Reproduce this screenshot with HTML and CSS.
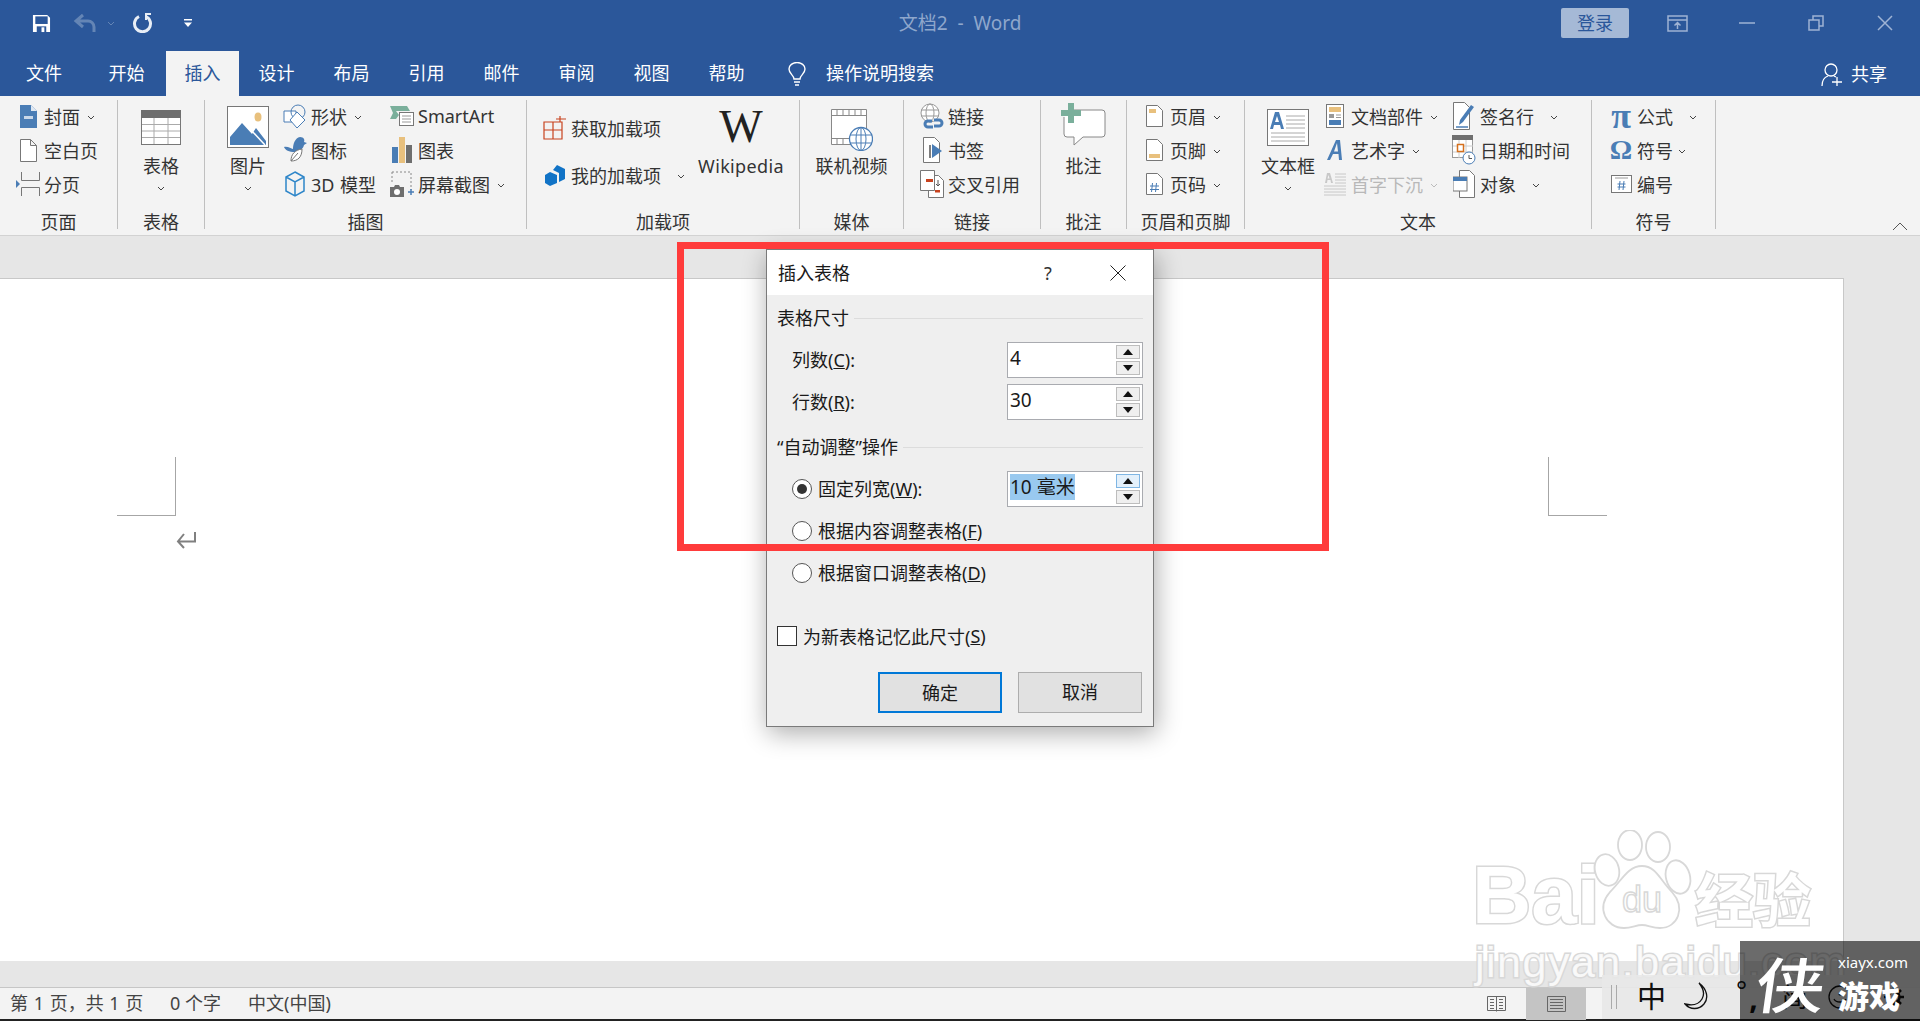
FILE: index.html
```html
<!DOCTYPE html>
<html lang="zh-CN">
<head>
<meta charset="utf-8">
<title>文档2 - Word</title>
<link rel="stylesheet" href="styles.css">
</head>
<body>
<div class="app">
  <header class="titlebar">
    <div class="qat">
      <svg class="q-save" viewBox="0 0 20 20"><path fill="#fff" d="M1 1h15l3 3v15H1z"/><rect x="3.500" y="2.500" width="13" height="8" fill="#2b579a"/><rect x="5" y="13" width="10" height="6" fill="#2b579a"/><rect x="10" y="14" width="3" height="5" fill="#fff"/></svg>
      <svg class="q-undo" viewBox="0 0 24 20"><path fill="none" stroke="#6485b5" stroke-width="3" d="M10 2 3 8l7 6M3 8h12a6 6 0 0 1 6 6v5"/></svg>
      <svg class="q-undo-chev" viewBox="0 0 8 5"><path fill="none" stroke="#6485b5" d="m1 1 3 3 3-3"/></svg>
      <svg class="q-redo" viewBox="0 0 22 20"><path fill="none" stroke="#e8eef6" stroke-width="3" d="M7 3.500a8 8 0 1 0 7 0"/><path fill="#e8eef6" d="M13 0h6v2h-4v5h-2z"/></svg>
      <svg class="q-more" viewBox="0 0 10 10"><path fill="#fff" d="M1 1h8v1.500H1zM1 4.500h8L5 9z"/></svg>
    </div>
    <div class="doc-title">文档2&nbsp; - &nbsp;Word</div>
    <div class="win">
      <span class="login">登录</span>
      <svg class="w-opt" viewBox="0 0 21 17"><path fill="none" stroke="#9fb3d4" stroke-width="1.500" d="M1 1h19v15H1zM1 5h19M10.500 14V8M7.500 10.500l3-3 3 3"/></svg>
      <svg class="w-min" viewBox="0 0 16 16"><path stroke="#9fb3d4" stroke-width="1.500" d="M0 8h16"/></svg>
      <svg class="w-res" viewBox="0 0 16 16"><path fill="none" stroke="#9fb3d4" stroke-width="1.500" d="M1 5h10v10H1zM5 5V1h10v10h-4"/></svg>
      <svg class="w-close" viewBox="0 0 16 16"><path stroke="#9fb3d4" stroke-width="1.500" d="m1 1 14 14M15 1 1 15"/></svg>
    </div>
  </header>

  <nav class="tabs">
    <span class="tab tab-file">文件</span>
    <span class="tab">开始</span>
    <span class="tab tab-on">插入</span>
    <span class="tab">设计</span>
    <span class="tab">布局</span>
    <span class="tab">引用</span>
    <span class="tab">邮件</span>
    <span class="tab">审阅</span>
    <span class="tab">视图</span>
    <span class="tab">帮助</span>
    <svg class="bulb" viewBox="0 0 18 24"><path fill="none" stroke="#fff" stroke-width="1.400" d="M6 17c0-4-5-5-5-10a8 6.500 0 0 1 16 0c0 5-5 6-5 10zM6 20h6M7 23h4"/></svg>
    <span class="search">操作说明搜索</span>
    <span class="share">
      <svg class="share-ico" viewBox="0 0 22 24"><circle cx="10" cy="7" r="6" fill="none" stroke="#fff" stroke-width="1.300"/><path fill="none" stroke="#fff" stroke-width="1.300" d="M1 23c0-6 3-9 6-10M13 13l2 1M16 14v9M11 19h10"/></svg>
      共享
    </span>
  </nav>

  <section class="ribbon">
    <div class="group g-page">
      <div class="gbody pad16">
        <div class="col">
          <div class="row"><span class="slot"><svg width="17" height="23" viewBox="0 0 17 23"><path fill="#4a7db5" d="M0 0h11l6 6v17H0z"/><path fill="#dfe8f2" d="M11 0l6 6h-6z"/><rect x="4" y="11" width="9" height="3" fill="#fff" opacity=".7"/></svg></span><span>封面</span><svg class="chev" viewBox="0 0 8 5"><path d="m1 1 3 3 3-3"/></svg></div>
          <div class="row"><span class="slot"><svg width="17" height="23" viewBox="0 0 17 23"><path fill="#fff" stroke="#777" d="M.5.500h10l6 6v16H.5zM10.500.500v6h6"/></svg></span><span>空白页</span></div>
          <div class="row"><span class="slot"><svg width="24" height="24" viewBox="0 0 24 24"><path fill="none" stroke="#777" d="M5.500 0v8.500h18V0M5.500 24v-8.500h18V24"/><path fill="#4a7db5" d="M0 8l4 4-4 4z"/></svg></span><span>分页</span></div>
        </div>
      </div>
      <div class="glabel">页面</div>
    </div>

    <div class="group g-table">
      <div class="gbody center">
        <div class="big">
          <div class="bigicon"><svg width="40" height="35" viewBox="0 0 40 35"><rect x=".5" y=".5" width="39" height="34" fill="#fff" stroke="#777"/><rect width="40" height="8" fill="#6e6e6e"/><path stroke="#aaa" d="M13 8v26M27 8v26M1 14.500h38M1 21h38M1 27.500h38"/></svg></div>
          <div class="bigtext">表格</div>
          <svg class="bigchev" viewBox="0 0 8 5"><path d="m1 1 3 3 3-3"/></svg>
        </div>
      </div>
      <div class="glabel">表格</div>
    </div>

    <div class="group g-illus">
      <div class="gbody">
        <div class="big big-pic">
          <div class="bigicon"><svg width="42" height="42" viewBox="0 0 42 42"><rect x=".5" y=".5" width="41" height="41" fill="#fff" stroke="#777"/><ellipse cx="31" cy="11" rx="3.500" ry="4.500" fill="#e8c07d"/><path fill="#4a7db5" d="M3 39V31L15 17l10 11 4-6 10 13v4z"/><path stroke="#fff" stroke-width="1.500" d="m24 24 14 15"/></svg></div>
          <div class="bigtext">图片</div>
          <svg class="bigchev" viewBox="0 0 8 5"><path d="m1 1 3 3 3-3"/></svg>
        </div>
        <div class="col col-shape">
          <div class="row"><span class="slot"><svg width="24" height="24" viewBox="0 0 24 24"><path fill="#fff" stroke="#4a7db5" d="M1 7h12v11H1z"/><circle cx="15" cy="8" r="7" fill="none" stroke="#4a7db5"/><path fill="#fff" stroke="#4a7db5" d="m14 8 8 8-8 8-7-8z"/></svg></span><span>形状</span><svg class="chev" viewBox="0 0 8 5"><path d="m1 1 3 3 3-3"/></svg></div>
          <div class="row"><span class="slot"><svg width="23" height="26" viewBox="0 0 23 26"><path fill="#4a7db5" d="M0 10c4-1 7 2 9 2 0-5 2-11 7-12 4 0 5 3 4 5l3 1-3 2c-1 4-4 6-9 7-6 0-10-2-11-5z"/><path fill="#fff" stroke="#777" d="M7 24c0-7 4-11 11-12 0 8-4 12-11 12zM7 24l7-8"/></svg></span><span>图标</span></div>
          <div class="row"><span class="slot"><svg width="20" height="26" viewBox="0 0 20 26"><path fill="none" stroke="#2e86c9" stroke-width="1.500" d="M10 1 19 6v14l-9 5-9-5V6zM1 6l9 5 9-5M10 11v14"/></svg></span><span class="wide-text">3D 模型</span></div>
        </div>
        <div class="col">
          <div class="row"><span class="slot"><svg width="24" height="20" viewBox="0 0 24 20"><path fill="#7aaf9b" d="M0 0h17l3 5H6l3 4-3 4H0l3-6z"/><rect x="9.500" y="6.500" width="14" height="13" fill="#fff" stroke="#777"/><path stroke="#999" d="M12 10h9M12 13h9M12 16h9"/></svg></span><span>SmartArt</span></div>
          <div class="row"><span class="slot"><svg width="20" height="26" viewBox="0 0 20 26"><rect y="10" width="6" height="16" fill="#4a7db5"/><rect x="7" width="6" height="26" fill="#e8c07d"/><rect x="14" y="8" width="6" height="18" fill="#6e6e6e"/></svg></span><span>图表</span></div>
          <div class="row"><span class="slot"><svg width="24" height="26" viewBox="0 0 24 26"><path fill="none" stroke="#888" stroke-dasharray="2 2" d="M2 1h19v18"/><path fill="none" stroke="#888" stroke-dasharray="2 2" d="M2 1v12"/><path fill="#6e6e6e" d="M0 16h4l1-2h4l1 2h4v10H0z"/><circle cx="7" cy="21" r="3" fill="#fff"/><path stroke="#4a7db5" stroke-width="1.500" d="M18 21h6M21 18v6"/></svg></span><span>屏幕截图</span><svg class="chev" viewBox="0 0 8 5"><path d="m1 1 3 3 3-3"/></svg></div>
        </div>
      </div>
      <div class="glabel">插图</div>
    </div>

    <div class="group g-addin">
      <div class="gbody pad16">
        <div class="col col-addin">
          <div class="row"><span class="slot"><svg width="24" height="24" viewBox="0 0 24 24"><path fill="none" stroke="#c8431f" stroke-width="1.200" d="M1 6h18v17H1zM10 6v17M1 14h18M17 6V0M13 3h10"/></svg></span><span>获取加载项</span></div>
          <div class="row"><span class="slot"><svg width="20" height="21" viewBox="0 0 20 21"><path fill="#1173c6" d="M12 0l8 4v10l-6 3V8L8 5z"/><path fill="#1173c6" d="M5 7l7 3v8l-7 3-5-3v-8z"/></svg></span><span>我的加载项</span><svg class="chev chev-wide" viewBox="0 0 8 5"><path d="m1 1 3 3 3-3"/></svg></div>
        </div>
        <div class="big big-wiki">
          <div class="bigicon"><span class="wiki-w">W</span></div>
          <div class="bigtext wiki-text">Wikipedia</div>
        </div>
      </div>
      <div class="glabel">加载项</div>
    </div>

    <div class="group g-media">
      <div class="gbody center">
        <div class="big">
          <div class="bigicon"><svg class="down3" width="42" height="42" viewBox="0 0 42 42"><path fill="#fff" stroke="#888" d="M.5.500h35v35H.5z"/><path fill="none" stroke="#888" d="M.5 6.500h35M.5 29.500h35M6 .5v6M12 .5v6M18 .5v6M24 .5v6M30 .5v6M6 29.500v6M12 29.500v6"/><circle cx="30" cy="30" r="11.500" fill="#fff" stroke="#4a7db5" stroke-width="1.300"/><ellipse cx="30" cy="30" rx="5" ry="11.500" fill="none" stroke="#4a7db5"/><path stroke="#4a7db5" d="M30 18v24M19 26h22M19 34h22"/></svg></div>
          <div class="bigtext">联机视频</div>
        </div>
      </div>
      <div class="glabel">媒体</div>
    </div>

    <div class="group g-links">
      <div class="gbody pad16">
        <div class="col">
          <div class="row"><span class="slot"><svg width="24" height="26" viewBox="0 0 24 26"><circle cx="10" cy="10" r="9" fill="#fff" stroke="#999"/><ellipse cx="10" cy="10" rx="4" ry="9" fill="none" stroke="#999"/><path stroke="#999" d="M1 7h18M1 13h18"/><path fill="none" stroke="#4a7db5" stroke-width="3" d="M12 18h-4a3 3 0 0 0 0 6h5M14 23h5a3 3 0 0 0 0-6h-5"/></svg></span><span>链接</span></div>
          <div class="row"><span class="slot"><svg width="19" height="26" viewBox="0 0 19 26"><path fill="#fff" stroke="#777" d="M.5.500h11l5 5v20H.5z"/><path stroke="#555" stroke-width="1.500" d="M7 8v13"/><path fill="#4a7db5" d="M9 7l10 7-10 7z"/></svg></span><span>书签</span></div>
          <div class="row"><span class="slot"><svg width="24" height="28" viewBox="0 0 24 28"><path fill="#fff" stroke="#777" d="M8.500 5.500h10l5 5v17h-15z"/><path fill="#fff" stroke="#777" d="M.5.500h14v20H.5z"/><rect x="6" y="9" width="7" height="3" fill="#c8431f"/><rect x="15" y="20" width="5" height="2.500" fill="#c8431f"/><path stroke="#555" fill="none" d="M18 10v6M16 14l2 2 2-2"/></svg></span><span>交叉引用</span></div>
        </div>
      </div>
      <div class="glabel">链接</div>
    </div>

    <div class="group g-comment">
      <div class="gbody center">
        <div class="big">
          <div class="bigicon"><svg class="up3" width="45" height="43" viewBox="0 0 45 43"><path fill="#fff" stroke="#888" d="M11 7h30a3 3 0 0 1 3 3v21a3 3 0 0 1-3 3H22l-9 8v-8H6a3 3 0 0 1-3-3V14"/><path fill="#7aaf9b" d="M7 0h6v7h7v6h-7v7H7v-7H0V7h7z"/></svg></div>
          <div class="bigtext">批注</div>
        </div>
      </div>
      <div class="glabel">批注</div>
    </div>

    <div class="group g-hf">
      <div class="gbody pad15">
        <div class="col">
          <div class="row"><span class="slot"><svg width="17" height="22" viewBox="0 0 17 22"><path fill="#fff" stroke="#777" d="M.5.500h11l5 5v16H.5z"/><rect x="3" y="4" width="7" height="4" fill="#e8c07d"/></svg></span><span>页眉</span><svg class="chev" viewBox="0 0 8 5"><path d="m1 1 3 3 3-3"/></svg></div>
          <div class="row"><span class="slot"><svg width="17" height="22" viewBox="0 0 17 22"><path fill="#fff" stroke="#777" d="M.5.500h11l5 5v16H.5z"/><rect x="3" y="15" width="11" height="4" fill="#e8c07d"/></svg></span><span>页脚</span><svg class="chev" viewBox="0 0 8 5"><path d="m1 1 3 3 3-3"/></svg></div>
          <div class="row"><span class="slot"><svg width="17" height="22" viewBox="0 0 17 22"><path fill="#fff" stroke="#777" d="M.5.500h11l5 5v16H.5z"/><path stroke="#4a7db5" d="M6.500 10 5.500 19M10.500 10l-1 9M4 13h9M4 16.500h9"/></svg></span><span>页码</span><svg class="chev" viewBox="0 0 8 5"><path d="m1 1 3 3 3-3"/></svg></div>
        </div>
      </div>
      <div class="glabel">页眉和页脚</div>
    </div>

    <div class="group g-text">
      <div class="gbody">
        <div class="big big-box">
          <div class="bigicon"><svg width="42" height="37" viewBox="0 0 42 37"><rect x=".5" y=".5" width="41" height="36" fill="#fff" stroke="#777"/><path fill="#4a7db5" d="M8 3h4l5 17h-3l-1-4H7l-1 4H3zm2 4-2 6h4z"/><path stroke="#aaa" d="M19 7h19M19 11h19M19 15h19M19 19h19M4 24h34M4 28h34M4 32h34"/></svg></div>
          <div class="bigtext">文本框</div>
          <svg class="bigchev" viewBox="0 0 8 5"><path d="m1 1 3 3 3-3"/></svg>
        </div>
        <div class="col col-parts">
          <div class="row"><span class="slot"><svg width="18" height="24" viewBox="0 0 18 24"><rect x=".5" y=".5" width="17" height="23" fill="#fff" stroke="#777"/><rect x="3" y="3" width="12" height="5" fill="#e8c07d"/><rect x="3" y="10" width="5" height="4" fill="#999"/><path stroke="#999" d="M10 11h5M10 13.500h5"/><rect x="3" y="16" width="12" height="5" fill="#4a7db5"/></svg></span><span>文档部件</span><svg class="chev" viewBox="0 0 8 5"><path d="m1 1 3 3 3-3"/></svg></div>
          <div class="row"><span class="slot"><svg width="16" height="22" viewBox="0 0 16 22"><path fill="#4a7db5" d="M9 1h4l2 20h-3l-.5-6H6l-3 6H0zm1 3-3 8.500h4z"/></svg></span><span>艺术字</span><svg class="chev" viewBox="0 0 8 5"><path d="m1 1 3 3 3-3"/></svg></div>
          <div class="row row-off"><span class="slot"><svg width="22" height="24" viewBox="0 0 22 24"><path fill="#c8c8c8" d="M3 1h3l3 10H7l-.5-3h-3L3 11H1zm1.500 2-1 3.500h2z"/><path stroke="#c8c8c8" d="M11 2h11M11 5h11M11 8h11M11 11h11M0 14h22M0 17h22M0 20h22M0 23h22"/></svg></span><span>首字下沉</span><svg class="chev" viewBox="0 0 8 5"><path d="m1 1 3 3 3-3"/></svg></div>
        </div>
        <div class="col">
          <div class="row"><span class="slot"><svg width="22" height="28" viewBox="0 0 22 28"><path fill="#fff" stroke="#777" d="M.5.500h11l5 5v22H.5z"/><path fill="#4a7db5" d="M18 3l3 2-11 15-4 3 1-5z"/><path stroke="#4a7db5" stroke-width="1.500" d="M3 25h12"/></svg></span><span>签名行</span><svg class="chev chev-wide" viewBox="0 0 8 5"><path d="m1 1 3 3 3-3"/></svg></div>
          <div class="row"><span class="slot"><svg width="24" height="30" viewBox="0 0 24 30"><rect x=".5" y=".5" width="20" height="22" fill="#fff" stroke="#999"/><rect width="21" height="5" fill="#6e6e6e"/><path stroke="#ccc" d="M7 5v18M14 5v18M1 11h20M1 17h20"/><rect x="5.500" y="9.500" width="6" height="7" fill="#fff" stroke="#d5701d" stroke-width="1.500"/><circle cx="17" cy="23" r="6" fill="#fff" stroke="#4a7db5"/><path fill="none" stroke="#555" d="M17 20v3.500h3"/></svg></span><span>日期和时间</span></div>
          <div class="row"><span class="slot"><svg width="22" height="28" viewBox="0 0 22 28"><path fill="#fff" stroke="#777" d="M6.500.500h10l5 5v22h-15z"/><rect y="7" width="14" height="14" fill="#fff" stroke="#777"/><rect width="14" height="4" y="7" fill="#4a7db5"/></svg></span><span>对象</span><svg class="chev chev-wide" viewBox="0 0 8 5"><path d="m1 1 3 3 3-3"/></svg></div>
        </div>
      </div>
      <div class="glabel">文本</div>
    </div>

    <div class="group g-sym">
      <div class="gbody pad17">
        <div class="col">
          <div class="row"><span class="slot"><span class="sym-glyph sym-pi">π</span></span><span>公式</span><svg class="chev chev-wide" viewBox="0 0 8 5"><path d="m1 1 3 3 3-3"/></svg></div>
          <div class="row"><span class="slot"><span class="sym-glyph">Ω</span></span><span>符号</span><svg class="chev chev-tight" viewBox="0 0 8 5"><path d="m1 1 3 3 3-3"/></svg></div>
          <div class="row"><span class="slot"><svg width="21" height="18" viewBox="0 0 21 18"><rect x=".5" y=".5" width="20" height="17" fill="#fff" stroke="#777"/><path stroke="#999" d="M4 3h13"/><path stroke="#4a7db5" d="M9 6 8 15M13 6l-1 9M6.500 9h8M6.500 12h8"/></svg></span><span>编号</span></div>
        </div>
      </div>
      <div class="glabel">符号</div>
    </div>

    <svg class="collapse" viewBox="0 0 16 9"><path fill="none" stroke="#555" d="m1 8 7-7 7 7"/></svg>
  </section>

  <main class="docarea">
    <div class="page">
      <div class="margin-left">
        <div class="corner corner-l"></div>
        <svg class="ret" viewBox="0 0 20 18"><path fill="none" stroke="#808080" stroke-width="2" d="M19 1v9.500H2M8 3 2 10.500 8 17"/></svg>
      </div>
      <div class="corner corner-r"></div>
    </div>
  </main>

  <footer class="status">
    <span class="st st-page">第 1 页，共 1 页</span>
    <span class="st st-words">0 个字</span>
    <span class="st">中文(中国)</span>
    <span class="views">
      <svg class="v-read" viewBox="0 0 19 16"><path fill="none" stroke="#666" d="M.5.500h18v14H.5zM9.500.500v15M3 3.500h4M3 6.500h4M3 9.500h4M3 12.500h4M12 3.500h4M12 6.500h4M12 9.500h4M12 12.500h4"/></svg>
      <span class="v-print"><svg class="v-ico" viewBox="0 0 19 16"><path fill="none" stroke="#666" d="M.5.500h18v15H.5zM3 3.500h13M3 6.500h13M3 9.500h13M3 12.500h13"/></svg></span>
    </span>
  </footer>

  <div class="wm">
    <span class="wm-bai">Bai</span>
    <svg class="wm-paw" viewBox="0 0 102 100"><g fill="#fff" stroke="#d8d8d8" stroke-width="1.800"><ellipse cx="38" cy="15" rx="12" ry="15"/><ellipse cx="66" cy="17" rx="12" ry="15"/><ellipse cx="15" cy="40" rx="12" ry="16" transform="rotate(-15 15 40)"/><ellipse cx="86" cy="47" rx="12" ry="17" transform="rotate(-15 86 47)"/><path d="M50 36c14 0 18 14 30 26 14 16 6 36-12 36-8 0-12-3-18-3s-10 3-18 3C14 98 4 78 18 62c12-12 18-26 32-26z"/></g><text x="50" y="82" text-anchor="middle" class="wm-du">du</text></svg>
    <span class="wm-jy">经验</span>
    <div class="wm-url">jingyan.baidu.com</div>
  </div>

  <div class="ime">
    <svg class="ime-handle" viewBox="0 0 6 24"><path stroke="#aaa" d="M.5 0v24M5.500 0v24"/></svg>
    <span class="ime-zh">中</span>
    <svg class="ime-moon" viewBox="0 0 30 30"><path fill="none" stroke="#111" stroke-width="1.300" d="M15 1c8 6 10 15 5 21S6 28 1 22c8 2 14 0 17-5s1-11-3-16z"/></svg>
    <span class="ime-dot">°</span>
    <span class="ime-comma">,</span>
    <span class="ime-jian">简</span>
    <svg class="ime-smile" viewBox="0 0 24 24"><circle cx="12" cy="12" r="11" fill="none" stroke="#111" stroke-width="1.300"/><circle cx="12" cy="9" r="1.500" fill="#111"/><path fill="none" stroke="#111" stroke-width="1.300" d="M6 14c2 4 10 4 12 0"/></svg>
    <svg class="ime-gear" viewBox="0 0 20 20"><circle cx="10" cy="10" r="5.500" fill="none" stroke="#111" stroke-width="2.500"/><path stroke="#111" stroke-width="2.500" d="M10 0v4M10 16v4M0 10h4M16 10h4M3 3l3 3M14 14l3 3M17 3l-3 3M6 14l-3 3"/></svg>
  </div>

  <div class="badge">
    <span class="badge-big">侠</span>
    <div class="badge-right">
      <span class="badge-url">xiayx.com</span>
      <span class="badge-name">游戏</span>
    </div>
  </div>

  <div class="dialog">
    <div class="dlg-title">
      <span class="dlg-name">插入表格</span>
      <span class="dlg-help">?</span>
      <svg class="dlg-x" viewBox="0 0 16 16"><path stroke="#222" d="m.5.500 15 15M15.500.500l-15 15"/></svg>
    </div>
    <div class="dlg-body">
      <div class="legend"><span>表格尺寸</span><i class="rule"></i></div>
      <div class="f-row f-first">
        <span class="f-label">列数(<u>C</u>):</span>
        <div class="spin"><span class="val">4</span><span class="btns"><b class="up"></b><b class="down"></b></span></div>
      </div>
      <div class="f-row">
        <span class="f-label">行数(<u>R</u>):</span>
        <div class="spin"><span class="val">30</span><span class="btns"><b class="up"></b><b class="down"></b></span></div>
      </div>
      <div class="legend legend-2"><span>“自动调整”操作</span><i class="rule"></i></div>
      <div class="f-row f-first">
        <span class="f-label"><i class="radio radio-on"></i>固定列宽(<u>W</u>):</span>
        <div class="spin"><span class="val"><span class="sel">10 毫米</span></span><span class="btns"><b class="up up-hot"></b><b class="down"></b></span></div>
      </div>
      <div class="f-row"><span class="f-label"><i class="radio"></i>根据内容调整表格(<u>F</u>)</span></div>
      <div class="f-row"><span class="f-label"><i class="radio"></i>根据窗口调整表格(<u>D</u>)</span></div>
      <div class="check-row"><i class="check"></i>为新表格记忆此尺寸(<u>S</u>)</div>
      <div class="dlg-btns">
        <span class="btn btn-ok">确定</span>
        <span class="btn">取消</span>
      </div>
    </div>
  </div>

  <div class="redbox"></div>
</div>
</body>
</html>
```

FILE: styles.css
```css
* { box-sizing: border-box; }
html, body { margin: 0; padding: 0; }
body {
  font-family: "Noto Sans", "Noto Sans CJK SC", sans-serif;
  font-size: 18px;
  color: #333;
  background: #e6e6e6;
}
svg { display: block; flex: none; }
.app {
  position: relative;
  width: 1920px;
  height: 1021px;
  overflow: hidden;
  display: flex;
  flex-direction: column;
}

/* title bar */
.titlebar {
  height: 51px;
  background: #2b579a;
  display: grid;
  grid-template-columns: 1fr auto 1fr;
  padding-bottom: 5px;
  align-items: center;
}
.qat { display: flex; align-items: center; padding-left: 32px; }
.q-save { width: 19px; height: 19px; }
.q-undo { width: 24px; height: 20px; margin-left: 22px; }
.q-undo-chev { width: 8px; height: 5px; margin-left: 10px; }
.q-redo { width: 22px; height: 20px; margin-left: 17px; }
.q-more { width: 10px; height: 10px; margin-left: 29px; }
.doc-title { color: #8fa7cc; font-size: 19px; line-height: 24px; }
.win { display: flex; align-items: center; justify-content: flex-end; }
.login {
  width: 68px;
  height: 30px;
  line-height: 30px;
  text-align: center;
  background: #a5b9d6;
  color: #2b579a;
  border-radius: 2px;
}
.w-opt { width: 21px; height: 17px; margin-left: 38px; }
.w-min { width: 16px; height: 16px; margin-left: 51px; }
.w-res { width: 16px; height: 16px; margin-left: 53px; }
.w-close { width: 16px; height: 16px; margin-left: 53px; margin-right: 27px; }

/* tabs */
.tabs {
  height: 45px;
  background: #2b579a;
  color: #fff;
  display: flex;
  align-items: stretch;
}
.tab {
  width: 75px;
  line-height: 44px;
  text-align: center;
  font-size: 18px;
}
.tab-file { width: 89px; text-align: left; padding-left: 26px; }
.tab-on { width: 73px; margin-left: 2px; background: #f3f3f3; color: #2b579a; }
.bulb { width: 18px; height: 24px; margin: 11px 0 0 24px; }
.search { margin-left: 20px; line-height: 44px; }
.share { margin-left: auto; margin-right: 33px; display: flex; align-items: center; gap: 8px; padding-bottom: 1px; }
.share-ico { width: 22px; height: 24px; margin-top: 4px; }

/* ribbon */
.ribbon {
  height: 140px;
  padding-top: 4px;
  background: #f3f3f3;
  border-bottom: 1px solid #d2d2d2;
  display: flex;
}
.group {
  flex: none;
  height: 129px;
  border-right: 1px solid #bfbfbf;
}
.g-page { width: 118px; }
.g-table { width: 87px; }
.g-illus { width: 322px; }
.g-addin { width: 273px; }
.g-media { width: 104px; }
.g-links { width: 137px; }
.g-comment { width: 86px; }
.g-hf { width: 118px; }
.g-text { width: 347px; }
.g-sym { width: 124px; }
.gbody { height: 102px; margin-top: -1px; display: flex; }
.pad15 { padding-left: 15px; }
.pad16 { padding-left: 16px; }
.pad17 { padding-left: 17px; }
.center { justify-content: center; }
.glabel {
  margin-top: 11px;
  height: 20px;
  line-height: 20px;
  text-align: center;
  white-space: nowrap;
}
.col { display: flex; flex-direction: column; flex: none; }
.row {
  height: 34px;
  display: flex;
  align-items: center;
  white-space: nowrap;
}
.row-off { color: #b8b8b8; }
.slot {
  width: 24px;
  margin-right: 4px;
  display: flex;
  justify-content: center;
  align-items: center;
  flex: none;
}
.wide-text { word-spacing: 1px; }
.chev, .bigchev { width: 8px; height: 5px; }
.chev path, .bigchev path { fill: none; stroke: #444; stroke-width: 1; }
.chev { margin-left: 7px; margin-top: 2px; }
.chev-wide { margin-left: 16px; }
.chev-tight { margin-left: 5px; }
.row-off .chev path { stroke: #bbb; }

.big { display: flex; flex-direction: column; align-items: center; flex: none; }
.bigicon { height: 56px; display: flex; align-items: center; justify-content: center; }
.bigtext { height: 22px; line-height: 22px; white-space: nowrap; }
.bigchev { margin-top: 9px; }
.down3 { margin-top: 6px; }
.up3 { margin-bottom: 6px; }
.big-pic { width: 54px; margin-left: 16px; }
.col-shape { width: 107px; margin-left: 8px; }
.col-addin { width: 153px; padding-top: 12px; gap: 13px; }
.big-wiki { width: 90px; }
.wiki-text { letter-spacing: .35px; }
.wiki-w {
  font-family: "Liberation Serif", serif;
  font-size: 46px;
  line-height: 46px;
  color: #222;
}
.big-box { width: 60px; margin-left: 13px; }
.col-parts { width: 129px; margin-left: 5px; }
.sym-glyph {
  font-family: "Liberation Serif", serif;
  font-weight: bold;
  font-size: 28px;
  line-height: 28px;
  color: #4a7db5;
}
.sym-pi { font-size: 36px; }
.collapse {
  width: 16px;
  height: 9px;
  margin-left: auto;
  margin-right: 12px;
  margin-top: 122px;
}

/* document */
.docarea {
  flex: 1;
  padding-top: 42px;
  background: #e6e6e6;
}
.page {
  width: 1844px;
  height: 683px;
  background: #fff;
  border-top: 1px solid #c8c8c8;
  border-right: 1px solid #c8c8c8;
  padding: 178px 236px 0 117px;
  display: flex;
  justify-content: space-between;
  align-items: flex-start;
}
.corner { width: 59px; height: 59px; border-bottom: 1px solid #a6a6a6; }
.corner-l { border-right: 1px solid #a6a6a6; }
.corner-r { border-left: 1px solid #a6a6a6; }
.ret { width: 20px; height: 18px; margin: 15px 0 0 59px; }

/* status bar */
.status {
  height: 34px;
  background: #f3f3f3;
  border-top: 1px solid #c6c6c6;
  border-bottom: 2px solid #222;
  display: flex;
  align-items: stretch;
  padding-left: 10px;
  color: #444;
}
.st { line-height: 30px; font-size: 18px; }
.st-page { width: 160px; word-spacing: 1px; }
.st-words { width: 78px; }
.views { margin-left: auto; margin-right: 334px; display: flex; align-items: center; }
.v-read { width: 19px; height: 16px; margin-right: 20px; }
.v-print {
  width: 60px;
  height: 32px;
  background: #c4c4c4;
  display: flex;
  align-items: center;
  justify-content: center;
}
.v-ico { width: 19px; height: 16px; }

/* baidu watermark */
.wm {
  position: absolute;
  left: 1472px;
  top: 830px;
  width: 348px;
  height: 150px;
}
.wm-bai, .wm-jy, .wm-url {
  color: #fff;
  -webkit-text-stroke: 3px #d8d8d8;
  paint-order: stroke fill;
}
.wm-bai {
  position: absolute;
  left: 0;
  top: 23px;
  font-family: "Liberation Sans", sans-serif;
  font-size: 82px;
  line-height: 84px;
  font-weight: bold;
}
.wm-paw { position: absolute; left: 120px; top: 0; width: 102px; height: 100px; }
.wm-du {
  font-family: "Liberation Sans", sans-serif;
  font-size: 36px;
  fill: #fff;
  stroke: #d8d8d8;
  stroke-width: 1.5px;
}
.wm-jy {
  position: absolute;
  left: 223px;
  top: 34px;
  font-size: 58px;
  line-height: 66px;
  font-weight: bold;
  font-family: "Noto Sans CJK SC", sans-serif;
}
.wm-url {
  position: absolute;
  left: 3px;
  top: 107px;
  font-family: "Liberation Sans", sans-serif;
  font-size: 43px;
  line-height: 50px;
  letter-spacing: 1.5px;
  white-space: nowrap;
  color: rgba(255, 255, 255, .85);
}

/* IME bar */
.ime {
  position: absolute;
  left: 1602px;
  top: 975px;
  width: 318px;
  height: 44px;
  background: rgba(232, 232, 232, .9);
  display: flex;
  align-items: center;
  color: #111;
}
.ime-handle { width: 6px; height: 24px; margin-left: 9px; }
.ime-zh { font-size: 29px; line-height: 44px; margin-left: 20px; }
.ime-moon { width: 30px; height: 30px; margin-left: 18px; }
.ime-dot { font-size: 26px; line-height: 44px; margin-left: 22px; margin-top: -14px; }
.ime-comma { font-size: 30px; font-weight: bold; line-height: 44px; margin-left: 2px; margin-top: 2px; }
.ime-jian { font-size: 26px; line-height: 44px; margin-left: 24px; }
.ime-smile { width: 24px; height: 24px; margin-left: 20px; }
.ime-gear { width: 20px; height: 20px; margin-left: 32px; }

/* xiayx badge */
.badge {
  position: absolute;
  left: 1740px;
  top: 941px;
  width: 180px;
  height: 80px;
  background: rgba(0, 0, 0, .58);
  color: #fff;
  display: flex;
}
.badge-big {
  font-family: "Noto Sans CJK SC", sans-serif;
  font-weight: 500;
  font-size: 60px;
  line-height: 60px;
  margin: 11px 0 0 16px;
  width: 80px;
  transform: skewX(-8deg) scaleX(1.15);
  transform-origin: left center;
}
.badge-right { display: flex; flex-direction: column; margin-left: 2px; }
.badge-url { font-size: 15px; line-height: 20px; margin-top: 11px; }
.badge-name {
  font-family: "Noto Sans CJK SC", sans-serif;
  font-weight: 900;
  font-size: 31px;
  line-height: 36px;
  margin-top: 5px;
  white-space: nowrap;
}

/* dialog */
.dialog {
  position: absolute;
  left: 766px;
  top: 249px;
  width: 388px;
  height: 478px;
  background: #efefef;
  border: 1px solid #7a7a7a;
  box-shadow: 2px 6px 24px rgba(0, 0, 0, .33);
  color: #1a1a1a;
}
.dlg-title {
  height: 45px;
  background: #fff;
  display: flex;
  align-items: center;
  padding-left: 11px;
}
.dlg-name { line-height: 42px; }
.dlg-help { margin-left: 194px; width: 12px; color: #333; }
.dlg-x { width: 16px; height: 16px; margin-left: 54px; }
.dlg-body { padding: 11px 10px 0; }
.legend { height: 24px; display: flex; align-items: center; line-height: 24px; }
.legend-2 { margin-top: 15px; }
.rule { flex: 1; height: 1px; background: #dcdcdc; margin-left: 5px; }
.f-row {
  height: 36px;
  margin-top: 6px;
  padding-left: 15px;
  display: flex;
  justify-content: space-between;
  align-items: center;
}
.f-first { margin-top: 12px; }
.f-label { display: flex; align-items: center; white-space: nowrap; line-height: 24px; }
.radio {
  width: 20px;
  height: 20px;
  border-radius: 50%;
  border: 1px solid #555;
  background: #fff;
  margin-right: 6px;
  display: block;
  position: relative;
  flex: none;
}
.radio-on::after {
  content: "";
  position: absolute;
  left: 4px;
  top: 4px;
  width: 10px;
  height: 10px;
  border-radius: 50%;
  background: #333;
}
.spin {
  width: 136px;
  height: 36px;
  background: #fff;
  border: 1px solid #a9abb0;
  display: flex;
  justify-content: space-between;
  padding: 2px;
}
.val { font-size: 19px; line-height: 26px; }
.sel { background: #99c9ef; display: inline-block; height: 26px; line-height: 26px; }
.btns { width: 24px; display: flex; flex-direction: column; gap: 2px; }
.btns b {
  flex: 1;
  background: #efefef;
  border: 1px solid #bdbdbd;
  display: flex;
  align-items: center;
  justify-content: center;
}
.btns b::before { content: ""; border-left: 5px solid transparent; border-right: 5px solid transparent; }
.up::before { border-bottom: 6px solid #111; }
.down::before { border-top: 6px solid #111; }
.btns .up-hot { background: #e3f0fb; border-color: #7fb6e4; }
.check-row {
  height: 24px;
  margin-top: 33px;
  display: flex;
  align-items: center;
  white-space: nowrap;
}
.check {
  width: 20px;
  height: 20px;
  background: #fff;
  border: 1px solid #333;
  margin-right: 6px;
  flex: none;
}
.dlg-btns {
  margin-top: 24px;
  display: flex;
  justify-content: flex-end;
  gap: 16px;
  padding-right: 1px;
}
.btn {
  width: 124px;
  height: 41px;
  line-height: 38px;
  text-align: center;
  background: #e1e1e1;
  border: 1px solid #adadad;
}
.btn-ok { border: 2px solid #0078d7; }

/* annotation box */
.redbox {
  position: absolute;
  left: 677px;
  top: 242px;
  width: 652px;
  height: 309px;
  border: 7px solid #ff3b3b;
}
```
